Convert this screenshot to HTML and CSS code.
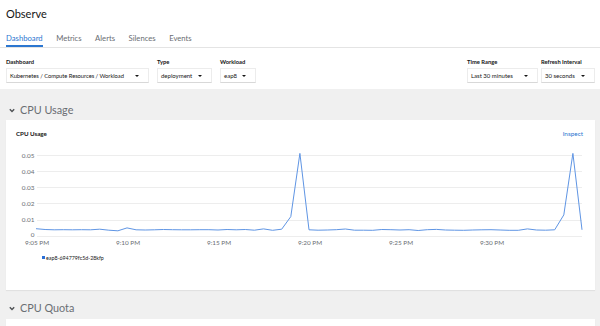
FILE: index.html
```html
<!DOCTYPE html>
<html>
<head>
<meta charset="utf-8">
<link rel="stylesheet" href="styles.css">
</head>
<body>
<div class="page">
  <header class="head">
    <h1 class="title">Observe</h1>
    <nav class="tabs">
      <span class="tab active">Dashboard</span>
      <span class="tab">Metrics</span>
      <span class="tab">Alerts</span>
      <span class="tab">Silences</span>
      <span class="tab">Events</span>
    </nav>
  </header>
  <div class="filters">
    <div class="group">
      <div class="field">
        <div class="label">Dashboard</div>
        <div class="select w-dash">Kubernetes / Compute Resources / Workload<span class="caret"></span></div>
      </div>
      <div class="field">
        <div class="label">Type</div>
        <div class="select w-type">deployment<span class="caret"></span></div>
      </div>
      <div class="field">
        <div class="label">Workload</div>
        <div class="select w-work">eap8<span class="caret"></span></div>
      </div>
    </div>
    <div class="group right">
      <div class="field">
        <div class="label">Time Range</div>
        <div class="select w-time">Last 30 minutes<span class="caret"></span></div>
      </div>
      <div class="field">
        <div class="label">Refresh Interval</div>
        <div class="select w-ref">30 seconds<span class="caret"></span></div>
      </div>
    </div>
  </div>
  <main class="body">
    <h2 class="section"><svg class="chev" width="6" height="5" viewBox="0 0 6 5"><path d="M0.8 1.2 L3 3.5 L5.2 1.2" fill="none" stroke="#4f5255" stroke-width="1.4"/></svg>CPU Usage</h2>
    <div class="card">
      <div class="card-head">
        <span class="card-title">CPU Usage</span>
        <span class="inspect">Inspect</span>
      </div>
      <svg class="chart" width="589" height="150" viewBox="0 0 589 150">
        <g stroke="#ededed" stroke-width="1">
          <line x1="31" y1="15.5" x2="576" y2="15.5"/>
          <line x1="31" y1="31.5" x2="576" y2="31.5"/>
          <line x1="31" y1="47.5" x2="576" y2="47.5"/>
          <line x1="31" y1="63.5" x2="576" y2="63.5"/>
          <line x1="31" y1="80.5" x2="576" y2="80.5"/>
          <line x1="31" y1="96.5" x2="576" y2="96.5"/>
        </g>
        <g class="ylab" text-anchor="end">
          <text x="28.5" y="17.5">0.05</text>
          <text x="28.5" y="33.5">0.04</text>
          <text x="28.5" y="49.5">0.03</text>
          <text x="28.5" y="65.5">0.02</text>
          <text x="28.5" y="82">0.01</text>
          <text x="28.5" y="97">0</text>
        </g>
        <g class="xlab" text-anchor="middle">
          <text x="31" y="104.8">9:05 PM</text>
          <text x="122" y="104.8">9:10 PM</text>
          <text x="213" y="104.8">9:15 PM</text>
          <text x="304" y="104.8">9:20 PM</text>
          <text x="395" y="104.8">9:25 PM</text>
          <text x="486" y="104.8">9:30 PM</text>
        </g>
        <polyline fill="none" stroke="#5f95e4" stroke-width="1" stroke-linejoin="round"
          points="30,88.7 39.1,89.5 48.2,89.8 57.3,89.7 66.4,89.8 75.5,89.7 84.6,89.8 93.7,89.2 102.8,90.2 111.9,90.8 121,87.9 130.1,89.8 139.2,90 148.3,89.8 157.4,89.5 166.5,89.7 175.6,89.8 184.7,89.8 193.8,89.7 202.9,89.7 212,90 221.1,89.5 230.2,89.8 239.3,89.5 248.4,90.2 257.5,88.9 266.6,90.3 275.7,89.2 284.8,76.6 293.9,13.4 303,89.8 312.1,90.2 321.2,90 330.3,89.7 339.4,89 348.5,90.2 357.6,90.2 366.7,90.3 375.8,89.5 384.9,89.7 394,90 403.1,89.7 412.2,90.5 421.3,89.7 430.4,89.4 439.5,90 448.6,90.2 457.7,90.3 466.8,90 475.9,89.8 485,89.7 494.1,90 503.2,90.3 512.3,90.3 521.4,88.9 530.5,90 539.6,90.2 548.7,89.8 557.8,74.9 566.9,13.4 576,89.8"/>
        <rect x="36" y="116" width="3" height="3" fill="#2b6fd6"/>
        <text class="legend" x="40" y="119.6">eap8-694779fc5d-28kfp</text>
      </svg>
    </div>
    <h2 class="section"><svg class="chev" width="6" height="5" viewBox="0 0 6 5"><path d="M0.8 1.2 L3 3.5 L5.2 1.2" fill="none" stroke="#4f5255" stroke-width="1.4"/></svg>CPU Quota</h2>
    <div class="card tall"></div>
  </main>
</div>
</body>
</html>
```
FILE: styles.css
```css
* { box-sizing: border-box; }
html, body { margin: 0; padding: 0; height: 100%; overflow: hidden; }
body {
  font-family: Lato, "Open Sans", sans-serif;
  color: #151515;
  background: #fff;
}
.page { display: flex; flex-direction: column; height: 100%; }
.head { padding: 0 6px; border-bottom: 1px solid #e4e4e4; }
.title {
  margin: 0;
  padding-top: 5px;
  font-size: 11px;
  line-height: 17px;
  font-weight: 400;
}
.tabs { display: flex; gap: 13.5px; margin-top: 4px; }
.tab {
  font-size: 7.7px;
  line-height: 12px;
  padding: 6px 0 1px;
  color: #6a6e73;
  border-bottom: 2px solid transparent;
}
.tab.active { color: #2b76d0; border-bottom-color: #2b76d0; }
.filters {
  display: flex;
  justify-content: space-between;
  padding: 9px 5px 6px 6px;
}
.group { display: flex; gap: 8px; }
.group.right { gap: 3px; }
.label {
  font-size: 5.8px;
  font-weight: 700;
  line-height: 10px;
  margin-bottom: 1px;
  color: #151515;
}
.select {
  position: relative;
  height: 15px;
  border: 1px solid #ececec;
  border-bottom-color: #d8d8d8;
  font-size: 6px;
  line-height: 13px;
  padding-left: 3px;
  color: #151515;
  white-space: nowrap;
}
.w-dash { font-size: 5.8px; letter-spacing: -0.05px; }
.caret {
  position: absolute;
  right: 9px;
  top: 5.5px;
  width: 0; height: 0;
  border-left: 2px solid transparent;
  border-right: 2px solid transparent;
  border-top: 2.2px solid #151515;
}
.w-dash { width: 143px; }
.w-type { width: 55px; }
.w-work { width: 36px; }
.w-time { width: 71px; }
.w-ref { width: 54px; }
.body {
  flex: 1;
  background: #f0f0f0;
  padding: 13px 5px 0 6px;
  overflow: hidden;
}
.section {
  display: flex;
  align-items: center;
  gap: 5px;
  margin: 0;
  padding-left: 3px;
  font-size: 10.8px;
  font-weight: 400;
  line-height: 16px;
  color: #6a6e73;
}
.section + .card { margin-top: 2px; }
.card + .section { margin-top: 10px; }
.card {
  background: #fff;
  box-shadow: 0 1px 1px rgba(0,0,0,0.06);
}
.card.tall { height: 200px; margin-top: 3px; }
.card-head {
  display: flex;
  justify-content: space-between;
  padding: 9px 12px 1px 10px;
  line-height: 10px;
}
.card-title { font-size: 6.2px; font-weight: 700; }
.inspect { font-size: 6.4px; color: #2b76d0; }
.chart { display: block; }
.ylab text, .xlab text { font-size: 6.4px; fill: #6a6e73; font-family: Lato, "Open Sans", sans-serif; }
.legend { font-size: 5.3px; fill: #151515; font-family: Lato, "Open Sans", sans-serif; }
```
